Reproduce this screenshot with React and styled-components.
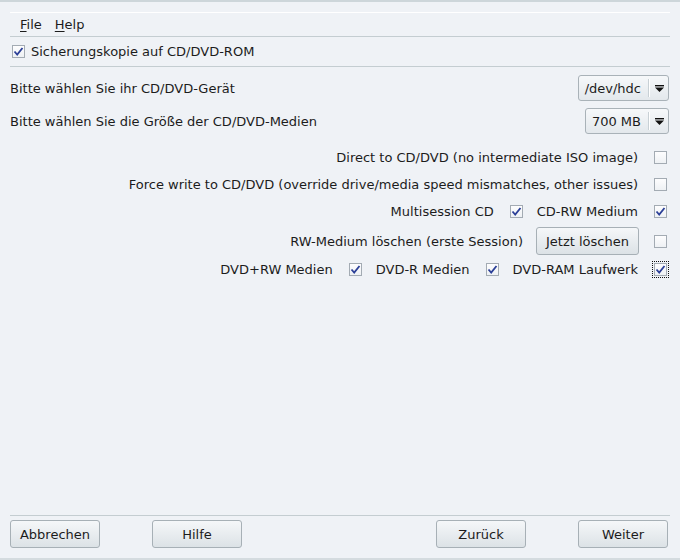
import styled, { createGlobalStyle } from "styled-components";

const GlobalStyle = createGlobalStyle`
  html, body {
    margin: 0;
    padding: 0;
    background: #eff2f6;
  }
  body {
    font-family: "DejaVu Sans", "Liberation Sans", sans-serif;
    font-size: 13px;
    color: #1c1c1c;
  }
`;

const Window = styled.div`
  width: 680px;
  height: 560px;
  box-sizing: border-box;
  border-top: 2px solid #cdd6da;
  border-bottom: 2px solid #d4dbdf;
  display: flex;
  flex-direction: column;
  padding: 0 10px;
`;

const MenuBar = styled.div`
  margin-top: 10px;
  border-top: 1px solid #ffffff;
  border-bottom: 1px solid #c4cdd1;
  height: 23px;
  display: flex;
  align-items: center;
  gap: 13px;
  padding-left: 10px;
`;

const MenuItem = styled.span`
  u {
    text-decoration: underline;
    text-underline-offset: 2px;
  }
`;

const TopCheckRow = styled.div`
  height: 29px;
  display: flex;
  align-items: center;
  gap: 4px;
  border-bottom: 1px solid #c4cdd1;
`;

const Body = styled.div`
  display: flex;
  flex-direction: column;
  padding-top: 8px;
`;

const SelectRow = styled.div`
  display: flex;
  align-items: center;
  justify-content: space-between;
  height: 26px;
  margin-bottom: 7px;
`;

const Select = styled.div`
  height: 26px;
  box-sizing: border-box;
  border: 1px solid #a9b2b8;
  border-radius: 3px;
  background: linear-gradient(#f6f8fa, #e3e8ec);
  display: flex;
  align-items: center;
  margin-right: 1px;
`;

const SelectValue = styled.span`
  padding: 0 8px 0 6px;
`;

const SelectArrow = styled.span`
  border-left: 1px solid #ffffff;
  box-shadow: -1px 0 0 #c8d0d5;
  height: 18px;
  width: 18px;
  display: flex;
  align-items: center;
  justify-content: center;
`;

const Options = styled.div`
  display: flex;
  flex-direction: column;
  align-items: flex-end;
  padding-right: 1px;
  margin-top: 3px;
`;

const OptionRow = styled.div`
  display: flex;
  align-items: center;
  justify-content: flex-end;
  gap: ${(p) => (p.$tall ? 13 : 12)}px;
  height: ${(p) => (p.$tall ? 30 : 27)}px;
  margin-top: ${(p) => (p.$tall ? 1 : 0)}px;
`;

const Option = styled.label`
  display: flex;
  align-items: center;
  gap: 14px;
`;

const BoxWrap = styled.span`
  width: 17px;
  height: 17px;
  box-sizing: border-box;
  display: flex;
  align-items: center;
  justify-content: center;
  border: 1px dotted ${(p) => (p.$focus ? "#111" : "transparent")};
`;

const Box = styled.span`
  width: 13px;
  height: 13px;
  box-sizing: border-box;
  border: 1px solid #a3abb3;
  background: linear-gradient(#fdfdfe, #eef1f4);
  display: flex;
  align-items: center;
  justify-content: center;
`;

const Button = styled.button`
  font: inherit;
  color: inherit;
  height: 28px;
  width: ${(p) => p.$w || 90}px;
  box-sizing: border-box;
  border: 1px solid #a7b0b6;
  border-radius: 3px;
  background: linear-gradient(#f5f7f9, #dce2e6);
  padding: 0;
`;

const Spacer = styled.div`
  flex: 1;
`;

const Footer = styled.div`
  border-top: 1px solid #c4cdd1;
  padding-top: 4px;
  height: 38px;
  display: flex;
  justify-content: space-between;
`;

const ButtonGroup = styled.div`
  display: flex;
  gap: 52px;
  padding-right: ${(p) => p.$pr || 0}px;
`;

const Check = () => (
  <svg width="11" height="11" viewBox="0 0 11 11">
    <path d="M1.5 5.5 L4.2 8.5 L9.5 2" fill="none" stroke="#2b3f97" strokeWidth="1.8" />
  </svg>
);

const CheckBox = ({ checked, focus }) => (
  <BoxWrap $focus={focus}>
    <Box>{checked && <Check />}</Box>
  </BoxWrap>
);

const Arrow = () => (
  <svg width="11" height="9" viewBox="0 0 11 9">
    <rect x="1" y="1" width="9" height="1.4" fill="#111" />
    <path d="M1 3.5 H10 L5.5 8 Z" fill="#111" />
  </svg>
);

const Dropdown = ({ value }) => (
  <Select>
    <SelectValue>{value}</SelectValue>
    <SelectArrow>
      <Arrow />
    </SelectArrow>
  </Select>
);

const App = () => (
  <>
    <GlobalStyle />
    <Window>
      <MenuBar>
        <MenuItem>
          <u>F</u>ile
        </MenuItem>
        <MenuItem>
          <u>H</u>elp
        </MenuItem>
      </MenuBar>
      <TopCheckRow>
        <CheckBox checked />
        <span>Sicherungskopie auf CD/DVD-ROM</span>
      </TopCheckRow>
      <Body>
        <SelectRow>
          <span>Bitte wählen Sie ihr CD/DVD-Gerät</span>
          <Dropdown value="/dev/hdc" />
        </SelectRow>
        <SelectRow>
          <span>Bitte wählen Sie die Größe der CD/DVD-Medien</span>
          <Dropdown value="700 MB" />
        </SelectRow>
        <Options>
          <OptionRow>
            <Option>
              Direct to CD/DVD (no intermediate ISO image)
              <CheckBox />
            </Option>
          </OptionRow>
          <OptionRow>
            <Option>
              Force write to CD/DVD (override drive/media speed mismatches, other issues)
              <CheckBox />
            </Option>
          </OptionRow>
          <OptionRow>
            <Option>
              Multisession CD
              <CheckBox checked />
            </Option>
            <Option>
              CD-RW Medium
              <CheckBox checked />
            </Option>
          </OptionRow>
          <OptionRow $tall>
            <span>RW-Medium löschen (erste Session)</span>
            <Button $w={103}>Jetzt löschen</Button>
            <CheckBox />
          </OptionRow>
          <OptionRow>
            <Option>
              DVD+RW Medien
              <CheckBox checked />
            </Option>
            <Option>
              DVD-R Medien
              <CheckBox checked />
            </Option>
            <Option>
              DVD-RAM Laufwerk
              <CheckBox checked focus />
            </Option>
          </OptionRow>
        </Options>
      </Body>
      <Spacer />
      <Footer>
        <ButtonGroup>
          <Button>Abbrechen</Button>
          <Button>Hilfe</Button>
        </ButtonGroup>
        <ButtonGroup $pr={2}>
          <Button>Zurück</Button>
          <Button>Weiter</Button>
        </ButtonGroup>
      </Footer>
    </Window>
  </>
);

export default App;
